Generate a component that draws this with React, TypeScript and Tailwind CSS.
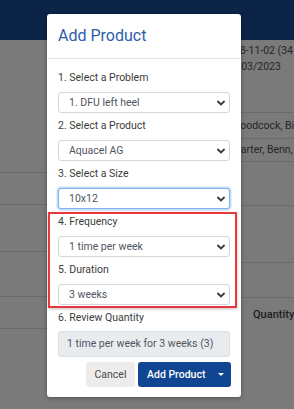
import { ReactNode } from "react";

function Chevron() {
    return (
        <svg width="8" height="6" viewBox="0 0 8 6" className="shrink-0">
            <polyline points="1,1.5 4,4.5 7,1.5" fill="none" stroke="#3a3a3a" strokeWidth="1.8" strokeLinecap="round" strokeLinejoin="round" />
        </svg>
    );
}

function Field({ label, value, focused }: { label: string; value: string; focused?: boolean }) {
    return (
        <div className="flex flex-col">
            <div className="h-[14px] leading-[14px] text-[10.5px] text-[#3c3c3c]">{label}</div>
            <div
                className={
                    focused
                        ? "mt-[7px] h-[21px] rounded-[3px] border border-[#7fb2ec] shadow-[0_0_0_1.5px_rgba(128,178,236,0.45)] bg-white flex items-center justify-between pl-[10px] pr-[4px]"
                        : "mt-[7px] h-[21px] rounded-[3px] border border-[#d3d7db] bg-white flex items-center justify-between pl-[10px] pr-[4px]"
                }
            >
                <span className="text-[10.5px] text-[#505560]">{value}</span>
                <Chevron />
            </div>
        </div>
    );
}

function Row({ children, className }: { children?: ReactNode; className: string }) {
    return <div className={className}>{children}</div>;
}

export default function App() {
    return (
        <div className="relative w-[294px] h-[409px] overflow-hidden bg-[#7a7a7a] font-['Roboto',_'Liberation_Sans',_sans-serif]">
            {/* page behind the dialog */}
            <div className="h-[40px] bg-[#0b2447]" />
            <div className="flex h-[369px]">
                <div className="flex-1 flex flex-col">
                    <Row className="h-[133px] border-b border-[#6b6b6b]" />
                    <Row className="h-[32px] border-b border-[#6b6b6b]" />
                    <Row className="h-[47px] border-b border-[#6b6b6b]" />
                    <Row className="h-[45px] border-b border-[#6b6b6b]" />
                    <Row className="h-[32px] border-b border-[#6b6b6b]" />
                </div>
                <div className="w-[72px] flex flex-col overflow-hidden whitespace-nowrap text-[10.5px] text-[#262626]">
                    <div className="pt-[3px] leading-[16px]">2018-11-02 (34 days)</div>
                    <div className="leading-[16px] pl-[3px]">01/03/2023</div>
                    <Row className="h-[38px] border-b border-[#6b6b6b]" />
                    <div className="h-[26px] border-b border-[#6b6b6b] flex items-center pl-[9px]">Woodcock, Bill</div>
                    <div className="h-[23px] border-b border-[#6b6b6b] flex items-center pl-[12px]">Carter, Benn, J</div>
                    <Row className="h-[44px] border-b border-[#6b6b6b]" />
                    <Row className="h-[57px] border-b border-[#6b6b6b]" />
                    <Row className="h-[35px] border-b border-[#6b6b6b]" />
                    <div className="pt-[9px] pl-[31px] font-medium text-[11px] text-[#1e1e1e]">Quantity</div>
                </div>
            </div>

            {/* dialog */}
            <div className="absolute left-[47px] top-[14px] w-[194px] h-[383px] bg-white rounded-[3px] shadow-[0_1px_4px_rgba(0,0,0,0.35)] flex flex-col">
                <div className="h-[45px] border-b border-[#e3e3e3] flex items-center px-[11px]">
                    <h2 className="text-[16px] text-[#2c5ea8]">Add Product</h2>
                </div>
                <div className="flex flex-col gap-[6px] px-[11px] pt-[12px]">
                    <Field label="1. Select a Problem" value="1. DFU left heel" />
                    <Field label="2. Select a Product" value="Aquacel AG" />
                    <Field label="3. Select a Size" value="10x12" focused />
                    <Field label="4. Frequency" value="1 time per week" />
                    <Field label="5. Duration" value="3 weeks" />
                    <div className="flex flex-col">
                        <div className="h-[14px] leading-[14px] text-[10.5px] text-[#3c3c3c]">6. Review Quantity</div>
                        <div className="mt-[6px] h-[26px] rounded-[3px] border border-[#dcdfe3] bg-[#e9ecef] flex items-center pl-[8px] text-[10.5px] text-[#505560]">
                            1 time per week for 3 weeks (3)
                        </div>
                    </div>
                </div>
                <div className="flex justify-end gap-[3px] pl-[11px] pr-[10px] pt-[5px]">
                    <button className="w-[49px] h-[25px] rounded-[3px] bg-[#ececec] text-[10.5px] text-[#4a4a4a]">Cancel</button>
                    <button className="w-[93px] h-[25px] rounded-[3px] bg-[#0f4591] text-white text-[10.5px] font-medium flex items-center pl-[9px] pr-[7px] justify-between">
                        <span>Add Product</span>
                        <span className="w-0 h-0 border-l-[3px] border-r-[3px] border-t-[3px] border-l-transparent border-r-transparent border-t-white" />
                    </button>
                </div>

                {/* highlight around frequency / duration */}
                <div className="absolute left-[1px] top-[198px] w-[189px] h-[96px] border-2 border-[#e8383d] shadow-[0_1px_3px_rgba(0,0,0,0.25)]" />
            </div>
        </div>
    );
}
